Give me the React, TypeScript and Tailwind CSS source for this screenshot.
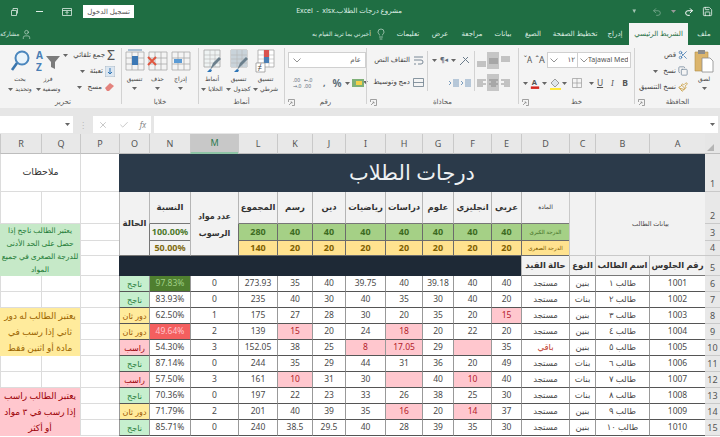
import { ReactNode } from 'react'
import { Copy, Lightbulb, Paintbrush, Redo2, Save, Scissors, Undo2, User, Check, X } from 'lucide-react'

const tabs = [
  { label: 'ملف', w: 'w-[32px]' },
  { label: 'الشريط الرئيسي', w: 'w-[59px]', active: true },
  { label: 'إدراج', w: 'w-[28px]' },
  { label: 'تخطيط الصفحة', w: 'w-[52px]' },
  { label: 'الصيغ', w: 'w-[32px]' },
  { label: 'بيانات', w: 'w-[28px]' },
  { label: 'مراجعة', w: 'w-[34px]' },
  { label: 'عرض', w: 'w-[30px]' },
  { label: 'تعليمات', w: 'w-[34px]' },
]

const columns = ['A', 'B', 'C', 'D', 'E', 'F', 'G', 'H', 'I', 'J', 'K', 'L', 'M', 'N', 'O', 'P', 'Q', 'R']
const subjects = ['عربي', 'انجليزي', 'علوم', 'دراسات', 'رياضيات', 'دين', 'رسم', 'المجموع']

const students = [
  { id: '1001', name: 'طالب ١', kind: 'بنين', reg: 'مستجد', scores: ['40', '40', '39.18', '40', '39.75', '40', '35'], total: '273.93', fails: '0', pct: '97.83%', status: 'ناجح' },
  { id: '1002', name: 'طالب ٢', kind: 'بنات', reg: 'مستجد', scores: ['20', '40', '30', '35', '40', '30', '40'], total: '235', fails: '0', pct: '83.93%', status: 'ناجح' },
  { id: '1003', name: 'طالب ٣', kind: 'بنين', reg: 'مستجد', scores: ['15', '20', '35', '20', '30', '28', '27'], total: '175', fails: '1', pct: '62.50%', status: 'دور ثان' },
  { id: '1004', name: 'طالب ٤', kind: 'بنين', reg: 'مستجد', scores: ['20', '22', '20', '18', '24', '20', '15'], total: '139', fails: '2', pct: '49.64%', status: 'دور ثان' },
  { id: '1005', name: 'طالب ٥', kind: 'بنين', reg: 'باقي', scores: ['35', '', '29', '17.05', '8', '25', '38'], total: '152.05', fails: '3', pct: '54.30%', status: 'راسب' },
  { id: '1006', name: 'طالب ٦', kind: 'بنات', reg: 'مستجد', scores: ['49', '20', '36', '31', '44', '29', '35'], total: '244', fails: '0', pct: '87.14%', status: 'ناجح' },
  { id: '1007', name: 'طالب ٧', kind: 'بنات', reg: 'مستجد', scores: ['40', '10', '40', '', '30', '31', '10'], total: '161', fails: '3', pct: '57.50%', status: 'راسب' },
  { id: '1008', name: 'طالب ٨', kind: 'بنات', reg: 'مستجد', scores: ['30', '25', '38', '26', '33', '23', '22'], total: '197', fails: '0', pct: '70.36%', status: 'ناجح' },
  { id: '1009', name: 'طالب ٩', kind: 'بنين', reg: 'مستجد', scores: ['37', '14', '20', '16', '35', '39', '40'], total: '201', fails: '2', pct: '71.79%', status: 'دور ثان' },
  { id: '1010', name: 'طالب ١٠', kind: 'بنين', reg: 'مستجد', scores: ['30', '35', '39', '28', '40', '29.5', '38.5'], total: '240', fails: '0', pct: '85.71%', status: 'ناجح' },
]

const statusStyle: Record<string, string> = {
  'ناجح': 'bg-[#c6efce] text-[#1c7a35]',
  'دور ثان': 'bg-[#ffeb9c] text-[#9c5700]',
  'راسب': 'bg-[#ffc7ce] text-[#9c0006]',
}

const center = 'flex items-center justify-center overflow-hidden whitespace-nowrap'
const blank = 'border-l border-b border-[#dcdcdc]'
const head = `${center} bg-[#f2f2f2] border-l border-b border-l-[#b5b5b5] border-b-[#777] text-[#333] font-bold text-[8.5px]`
const line = `${center} border-l border-b border-l-[#999] border-b-[#555]`
const arabic = `${line} bg-white text-[#4a4a4a] text-[8.5px]`
const num = `${line} text-[#4a4a4a] text-[8.5px]`
const green = `${center} bg-[#a5d086] border-l border-b border-[#6b6b6b] text-[#3d6b22] font-bold text-[9px]`
const yellow = `${center} bg-[#ffe28f] border-l border-b border-[#6b6b6b] text-[#806000] font-bold text-[9px]`

function Caret({ className = '' }: { className?: string }) {
  return (
    <svg width="5" height="3" viewBox="0 0 5 3" className={`shrink-0 ${className}`}>
      <path d="M0 0h5L2.5 3z" fill="#666" />
    </svg>
  )
}

function Launcher() {
  return (
    <svg width="7" height="7" viewBox="0 0 7 7" fill="none" stroke="#8a8a8a" strokeWidth="0.8">
      <path d="M.5 3V.5H6.5V6.5H4" />
      <path d="M1 6l3-3M2.5 3H4V4.5" />
    </svg>
  )
}

function Group({ w, label, launcher, children }: { w: string; label: string; launcher?: boolean; children: ReactNode }) {
  return (
    <div className={`${w} shrink-0 flex flex-col`}>
      <div className="h-[52px] flex">{children}</div>
      <div className="h-[11px] grid grid-cols-[10px_1fr_10px] items-center text-[7px] text-[#555]">
        <span />
        <span className="text-center whitespace-nowrap">{label}</span>
        {launcher ? <Launcher /> : <span />}
      </div>
    </div>
  )
}

function Divider() {
  return <div className="w-px h-[56px] mt-[3px] bg-[#d2d2d2] shrink-0" />
}

function BigButton({ w, icon, lines, caret }: { w: string; icon: ReactNode; lines: string[]; caret?: boolean }) {
  return (
    <div className={`${w} flex flex-col items-center pt-[4px] text-[6px] leading-[10px] text-[#444]`}>
      <div className="h-[24px] flex items-center">{icon}</div>
      <div className="mt-[1px] text-center whitespace-nowrap">
        {lines.map((l, i) => (
          <div key={i} className="flex items-center justify-center gap-[2px]">
            {l}
            {i === lines.length - 1 && lines.length > 1 && caret ? <Caret /> : null}
          </div>
        ))}
      </div>
      {lines.length === 1 && caret ? <Caret className="mt-[3px]" /> : null}
    </div>
  )
}

function SmallRow({ icon, label, caret }: { icon: ReactNode; label: string; caret?: boolean }) {
  return (
    <div className="h-[16px] flex items-center gap-[2px] text-[7px] text-[#444] whitespace-nowrap">
      {icon}
      <span>{label}</span>
      {caret ? <Caret className="mr-[3px]" /> : null}
    </div>
  )
}

function CellsIcon({ mark }: { mark: 'insert' | 'delete' | 'format' }) {
  return (
    <svg width="24" height="24" viewBox="0 0 24 24" fill="none">
      <path d="M3 3h18v18H3zM3 9h18M3 15h18M9 3v18M15 3v18" stroke="#a9a9a9" strokeWidth="0.8" />
      {mark === 'insert' && <path d="M5 10h8v4H5z" fill="#5b9bd5" />}
      {mark === 'delete' && <path d="M2 8l8 8M10 8l-8 8" stroke="#e0563f" strokeWidth="2" />}
      {mark === 'format' && <path d="M9 7h6v9H9z" fill="#3c78b5" />}
      {mark === 'format' && <path d="M5 1h14" stroke="#7a9cc0" strokeWidth="1.2" />}
    </svg>
  )
}

function StyleIcon({ kind }: { kind: 'cond' | 'table' | 'cell' }) {
  return (
    <svg width="22" height="24" viewBox="0 0 22 24" fill="none">
      <path d="M3 1h16v17H3z" fill={kind === 'cell' ? '#eef3f3' : '#fff'} stroke="#a5a5a5" strokeWidth="0.8" />
      {kind === 'table' && <path d="M3 1h16v17H3z" fill="#c9d3da" />}
      <path d="M3 6h16M3 10h16M3 14h16M9 1v17M14 1v17" stroke="#b5b5b5" strokeWidth="0.6" />
      {kind === 'cond' && <path d="M9 1h5v7H9z" fill="#d9534f" />}
      {kind === 'cond' && <path d="M9 8h5v6H9z" fill="#4a7fb5" />}
      {kind === 'cond' && <path d="M1 14h9v9H1z" fill="#fff" stroke="#8a8a8a" strokeWidth="0.7" />}
      {kind === 'cond' && <text direction="ltr" x="2.5" y="21.5" fontSize="8" fill="#444">≠</text>}
      {kind !== 'cond' && <path d="M9 21l3-7 6-6 2 2-6 6z" fill="#6b7f8c" />}
      {kind !== 'cond' && <path d="M6 23l3-3 2 1-1 2z" fill="#2e75b6" />}
    </svg>
  )
}

function Chevron() {
  return (
    <svg width="8" height="5" viewBox="0 0 8 5" fill="none" stroke="#777" strokeWidth="0.8" className="shrink-0">
      <path d="M.5.5L4 4 7.5.5" />
    </svg>
  )
}

function AlignBlock({ lines, active }: { lines: 'top' | 'mid' | 'bottom' | 'right' | 'center' | 'left' | 'indent'; active?: boolean }) {
  const d: Record<string, string> = {
    top: 'M1 2h9M1 4h9M1 6h9',
    mid: 'M1 4h9M1 6h9M1 8h9',
    bottom: 'M1 7h9M1 9h9M1 11h9',
    right: 'M1 3h9M4 5h6M1 7h9M4 9h6',
    center: 'M1 3h9M3 5h5M1 7h9M3 9h5',
    left: 'M1 3h9M1 5h6M1 7h9M1 9h6',
    indent: 'M5 3h6M5 5h6M5 7h6M5 9h6M1 4l2 2-2 2',
  }
  return (
    <span className={`w-[12px] h-[17px] flex items-center justify-center ${active ? 'bg-[#c6c6c6]' : ''}`}>
      <svg width="11" height="12" viewBox="0 0 11 12" fill="none" stroke={lines === 'indent' ? '#5a86b0' : '#7a7a7a'} strokeWidth="0.8">
        <path d={d[lines]} />
      </svg>
    </span>
  )
}

function Ribbon() {
  return (
    <div className="h-[63px] shrink-0 bg-[#f4f4f4] flex">
      <Group w="w-[85px]" label="الحافظة" launcher>
        <BigButton
          w="w-[32px]"
          caret
          lines={['لصق']}
          icon={
            <svg width="20" height="24" viewBox="0 0 20 24">
              <path d="M1 3h13v19H1z" fill="#dcb56c" stroke="#b08d47" strokeWidth="0.6" />
              <path d="M4 1h7v4H4z" fill="#8d8d8d" />
              <path d="M8 9h8l3 3v11H8z" fill="#fff" stroke="#8a8a8a" strokeWidth="0.8" />
            </svg>
          }
        />
        <div className="flex flex-col pt-[2px]">
          <SmallRow icon={<Scissors size={10} color="#4a7fb5" />} label="قص" />
          <SmallRow icon={<Copy size={10} color="#7d8fa1" />} label="نسخ" caret />
          <SmallRow icon={<Paintbrush size={10} color="#c79a3a" />} label="نسخ التنسيق" />
        </div>
      </Group>
      <Divider />
      <Group w="w-[115px]" label="خط" launcher>
        <div className="flex flex-col pt-[7px] pr-[3px]">
          <div className="flex items-center h-[16px]">
            <div className="w-[54px] h-[16px] bg-white border border-[#d0d0d0] flex items-center justify-between px-[2px] text-[7px] text-[#555]" dir="ltr">
              <Chevron />
              <span className="overflow-hidden whitespace-nowrap">Tajawal Medi</span>
            </div>
            <div className="w-[30px] h-[16px] bg-white border-y border-l border-[#d0d0d0] flex items-center justify-between px-[2px] text-[7px] text-[#555]" dir="ltr">
              <Chevron />
              <span>١٢</span>
            </div>
            <span className="w-[14px] text-center text-[9px] text-[#555]">Aˆ</span>
            <span className="w-[10px] text-center text-[8px] text-[#555]">Aˇ</span>
          </div>
          <div className="flex items-center h-[16px] mt-[7px] text-[8.5px] text-[#555]">
            <b className="w-[12px] text-center">B</b>
            <i className="w-[13px] text-center font-serif">I</i>
            <u className="w-[12px] text-center">U</u>
            <span className="w-[6px] flex justify-center"><Caret /></span>
            <span className="w-[22px] flex justify-center">
              <svg width="10" height="10" viewBox="0 0 10 10" fill="none" stroke="#9a9a9a" strokeWidth="0.7">
                <path d="M.5.5h9v9h-9zM.5 5h9M5 .5v9" />
              </svg>
            </span>
            <span className="w-[4px] flex justify-center"><Caret /></span>
            <span className="w-[14px] flex justify-center">
              <svg width="13" height="13" viewBox="0 0 13 13">
                <path d="M2 6l4-4 4 4-4 4z" fill="#dfe6ec" stroke="#7a7a7a" strokeWidth="0.7" />
                <path d="M1 11h11v2H1z" fill="#ffe93b" />
              </svg>
            </span>
            <span className="w-[8px] flex justify-center"><Caret /></span>
            <span className="w-[10px] flex justify-center">
              <svg width="12" height="13" viewBox="0 0 12 13">
                <text direction="ltr" x="2" y="8.5" fontSize="9" fill="#555" fontWeight="700">A</text>
                <path d="M1 10h10v3H1z" fill="#d5281f" />
              </svg>
            </span>
            <span className="w-[10px] flex justify-center"><Caret /></span>
          </div>
        </div>
      </Group>
      <Divider />
      <Group w="w-[151px]" label="محاذاة" launcher>
        <div className="flex flex-col pt-[7px] pr-[7px] w-[43px] shrink-0">
          <div className="flex h-[17px]">
            <AlignBlock lines="top" />
            <AlignBlock lines="mid" active />
            <AlignBlock lines="bottom" />
          </div>
          <div className="flex h-[17px] mt-[5px]">
            <AlignBlock lines="right" />
            <AlignBlock lines="center" active />
            <AlignBlock lines="left" />
          </div>
        </div>
        <div className="w-px h-[40px] mt-[6px] bg-[#d2d2d2] shrink-0" />
        <div className="flex flex-col pt-[7px] w-[46px] shrink-0">
          <div className="flex h-[17px] items-center">
            <span className="w-[16px] flex justify-end">
              <svg width="12" height="12" viewBox="0 0 12 12" fill="none" stroke="#6c7d8c" strokeWidth="1">
                <path d="M2 10l8-8M5 2l6 6" />
              </svg>
            </span>
            <Caret className="mr-[2px]" />
            <span className="w-[14px] text-center text-[7px] text-[#5c6b78] font-bold" dir="ltr">¶◂</span>
            <Caret />
          </div>
          <div className="flex h-[17px] items-center mt-[5px] pr-[3px]">
            <AlignBlock lines="indent" />
            <AlignBlock lines="indent" />
          </div>
        </div>
        <div className="w-px h-[40px] mt-[6px] bg-[#d2d2d2] shrink-0" />
        <div className="flex flex-col pt-[7px] pr-[3px]">
          <div className="h-[17px] flex items-center gap-[3px] text-[7px] text-[#444] whitespace-nowrap">
            <svg width="11" height="11" viewBox="0 0 11 11" fill="none" stroke="#6c7d8c" strokeWidth="0.9">
              <path d="M1 2h9M1 5h7a2 2 0 0 1 0 4H5M1 9h2" />
            </svg>
            التفاف النص
          </div>
          <div className="h-[17px] mt-[5px] flex items-center gap-[3px] text-[7px] text-[#444] whitespace-nowrap">
            <svg width="11" height="11" viewBox="0 0 11 11" fill="none" stroke="#6c7d8c" strokeWidth="0.8">
              <path d="M.5 1.5h10v8H.5zM.5 5.5h10" />
            </svg>
            دمج وتوسيط
            <Caret className="mr-[2px]" />
          </div>
        </div>
      </Group>
      <Divider />
      <Group w="w-[81px]" label="رقم" launcher>
        <div className="flex flex-col pt-[7px] w-full pl-[3px]">
          <div className="h-[16px] bg-white border border-[#d0d0d0] flex items-center justify-between px-[4px] text-[7px] text-[#555]">
            عام
            <Chevron />
          </div>
          <div className="flex h-[16px] items-center mt-[7px] text-[#5c6b78] whitespace-nowrap" dir="ltr">
            <span className="ml-[5px] text-[5px] leading-[6px] w-[10px]">.00<br />→.0</span>
            <span className="ml-[1px] text-[5px] leading-[6px] w-[10px]">←.0<br />.00</span>
            <span className="ml-[9px] text-[9px] font-bold">,</span>
            <span className="ml-[7px] text-[10px] font-bold">%</span>
            <Caret className="ml-[3px]" />
            <svg width="12" height="10" viewBox="0 0 12 10" className="ml-[2px]">
              <path d="M0 1h12v8H0z" fill="#7fb077" />
              <path d="M4 3h6v4H4z" fill="#f4d14a" />
            </svg>
          </div>
        </div>
      </Group>
      <Divider />
      <Group w="w-[85px]" label="أنماط">
        <div className="flex pr-[5px]">
          <BigButton w="w-[27px]" icon={<StyleIcon kind="cond" />} lines={['تنسيق', 'شرطي']} caret />
          <BigButton w="w-[27px]" icon={<StyleIcon kind="table" />} lines={['تنسيق', 'كجدول']} caret />
          <BigButton w="w-[26px]" icon={<StyleIcon kind="cell" />} lines={['أنماط', 'الخلايا']} caret />
        </div>
      </Group>
      <Divider />
      <Group w="w-[76px]" label="خلايا">
        <div className="flex pr-[6px]">
          <BigButton w="w-[23px]" icon={<CellsIcon mark="insert" />} lines={['إدراج']} caret />
          <BigButton w="w-[23px]" icon={<CellsIcon mark="delete" />} lines={['حذف']} caret />
          <BigButton w="w-[23px]" icon={<CellsIcon mark="format" />} lines={['تنسيق']} caret />
        </div>
      </Group>
      <Divider />
      <Group w="w-[116px]" label="تحرير">
        <div className="flex flex-col pt-[2px] pr-[6px] w-[58px]">
          <SmallRow icon={<span className="text-[14px] leading-[14px] text-[#555]">Σ</span>} label="جمع تلقائي" caret />
          <SmallRow
            icon={
              <svg width="10" height="11" viewBox="0 0 10 11">
                <path d="M0 0h10v11H0z" fill="#dce6f0" stroke="#8a9aa8" strokeWidth="0.5" />
                <path d="M5 2v6M3 6l2 2 2-2" stroke="#2e75b6" fill="none" strokeWidth="1" />
              </svg>
            }
            label="تعبئة"
            caret
          />
          <SmallRow
            icon={
              <svg width="11" height="10" viewBox="0 0 11 10">
                <path d="M1 6l5-5 4 3-5 5H3z" fill="#e3827d" />
              </svg>
            }
            label="مسح"
            caret
          />
        </div>
        <BigButton
          w="w-[30px]"
          icon={
            <svg width="24" height="24" viewBox="0 0 24 24">
              <text direction="ltr" x="0" y="10" fontSize="10" fontWeight="700" fill="#4a7fb5">A</text>
              <text direction="ltr" x="0" y="22" fontSize="10" fontWeight="700" fill="#4a7fb5">Z</text>
              <path d="M10 7h14l-5 6v7l-4-2v-5z" fill="#7b7b7b" />
            </svg>
          }
          lines={['فرز', 'وتصفية']}
          caret
        />
        <BigButton
          w="w-[26px]"
          icon={
            <svg width="20" height="24" viewBox="0 0 20 24" fill="none">
              <circle cx="12" cy="9" r="6.5" fill="#e8f3fb" stroke="#4a86bd" strokeWidth="2" />
              <path d="M7 14l-5 7" stroke="#3a75ad" strokeWidth="2.6" />
            </svg>
          }
          lines={['بحث', 'وتحديد']}
          caret
        />
      </Group>
    </div>
  )
}

function Sheet() {
  return (
    <div className="grid grid-cols-[15px_56px_54px_26px_48px_30px_38px_31px_37px_40px_33px_35px_39px_48px_41px_30px_39px_39px_41px] grid-rows-[20px_38px_32px_17px_15px_20px_repeat(11,16px)] bg-white text-[#4a4a4a]">
      <div className="bg-[#e6e6e6] flex items-end justify-end p-[2px] border-b border-[#bdbdbd]">
        <svg width="7" height="7" viewBox="0 0 7 7">
          <path d="M7 0v7H0z" fill="#b5b5b5" />
        </svg>
      </div>
      {columns.map((c) => (
        <div
          key={c}
          className={`${center} text-[9px] border-l border-[#c9c9c9] ${
            c === 'M' ? 'bg-[#c8c8c8] text-[#2d7a4e] border-b-2 border-b-[#8fc5a6]' : 'bg-[#e8e8e8] text-[#555] border-b border-b-[#bdbdbd]'
          }`}
        >
          {c}
        </div>
      ))}

      <RowNum n={1} />
      <div className={`${center} col-span-15 bg-[#2b3a4a] text-[#eef1f3] text-[21px]`}>درجات الطلاب</div>
      <div className={blank} />
      <div className={`${center} col-span-2 text-[9.5px] text-[#333] ${blank}`}>ملاحظات</div>

      <RowNum n={2} />
      <div className={`${center} col-span-2 row-span-3 bg-[#f2f2f2] border-l border-b border-[#c9c9c9] text-[6.5px]`}>بيانات الطالب</div>
      <div className={`${center} row-span-3 bg-[#f2f2f2] border-l border-b border-[#c9c9c9]`} />
      <div className={`${center} bg-[#f2f2f2] border-l border-b border-l-[#b5b5b5] border-b-[#777] text-[#333] text-[6px]`}>المادة</div>
      {subjects.map((s) => (
        <div key={s} className={head}>
          {s}
        </div>
      ))}
      <div className={`${center} flex-col row-span-3 bg-[#f2f2f2] border-l border-b border-l-[#b5b5b5] border-b-[#777] text-[#333] font-bold text-[8px] leading-[17px]`}>
        <span>عدد مواد</span>
        <span>الرسوب</span>
      </div>
      <div className={head}>النسبة</div>
      <div className={`${head} row-span-3`}>الحالة</div>
      <div className={blank} />
      <div className={blank} />
      <div className={blank} />

      <RowNum n={3} />
      <div className={`${center} bg-[#a5d086] border-l border-b border-[#6b6b6b] text-[#3d6b22] text-[5.5px]`}>الدرجة الكبرى</div>
      {subjects.map((s) => (
        <div key={s} className={green}>
          {s === 'المجموع' ? '280' : '40'}
        </div>
      ))}
      <div className={`${center} bg-[#f2f2f2] border-l border-b border-[#777] text-[#4d7a2c] font-bold text-[9px]`}>100.00%</div>
      <div className={blank} />
      <Note color="bg-[#c6e9c8] text-[#1c7a35]" lines={['يعتبر الطالب ناجح إذا', 'حصل على الحد الأدنى', 'للدرجة الصغرى في جميع', 'المواد']} size="text-[7.5px]" leading="leading-[13px]" />

      <RowNum n={4} />
      <div className={`${center} bg-[#ffe28f] border-l border-b border-[#6b6b6b] text-[#806000] text-[5.5px]`}>الدرجة الصغرى</div>
      {subjects.map((s) => (
        <div key={s} className={yellow}>
          {s === 'المجموع' ? '140' : '20'}
        </div>
      ))}
      <div className={`${center} bg-[#f2f2f2] border-l border-b border-[#777] text-[#7f6a10] font-bold text-[9px]`}>50.00%</div>
      <div className={blank} />

      <RowNum n={5} />
      <div className={head}>رقم الجلوس</div>
      <div className={head}>اسم الطالب</div>
      <div className={head}>النوع</div>
      <div className={head}>حالة القيد</div>
      <div className="col-span-11 bg-[#1e2936]" />
      <div className={blank} />

      {students.map((s, i) => {
        const pct = parseFloat(s.pct)
        return [
          <RowNum key="n" n={i + 6} />,
          <div key="id" className={`${num} bg-white`}>{s.id}</div>,
          <div key="name" className={arabic}>{s.name}</div>,
          <div key="kind" className={arabic}>{s.kind}</div>,
          s.reg === 'باقي' ? (
            <div key="reg" className={`${line} bg-white text-[#c0392b] text-[8.5px]`}>{s.reg}</div>
          ) : (
            <div key="reg" className={arabic}>{s.reg}</div>
          ),
          ...s.scores.map((v, j) => (
            <div key={j} className={`${line} text-[8.5px] ${v === '' || parseFloat(v) < 20 ? 'bg-[#ffc7ce] text-[#b3202a]' : 'bg-white text-[#4a4a4a]'}`}>
              {v}
            </div>
          )),
          <div key="total" className={`${num} bg-white`}>{s.total}</div>,
          <div key="fails" className={`${num} bg-white`}>{s.fails}</div>,
          <div
            key="pct"
            className={`${line} text-[8.5px] ${pct >= 90 ? 'bg-[#4f7f2f] text-[#9fcf85]' : pct < 50 ? 'bg-[#f45f5f] text-[#ffc7ce]' : 'bg-white text-[#4a4a4a]'}`}
          >
            {s.pct}
          </div>,
          <div key="status" className={`${line} text-[8px] ${statusStyle[s.status]}`}>{s.status}</div>,
          <div key="p" className={blank} />,
          ...(i === 2
            ? [<Note key="note" color="bg-[#ffeb9c] text-[#9c6500]" lines={['يعتبر الطالب له دور', 'ثاني إذا رسب في', 'مادة أو اثنين فقط']} />]
            : i === 7
              ? [<Note key="note" color="bg-[#ffc7ce] text-[#9c0006]" lines={['يعتبر الطالب راسب', 'إذا رسب في ٣ مواد', 'أو أكثر']} />]
              : i === 3 || i === 4 || i === 8 || i === 9
                ? []
                : [<div key="q" className={blank} />, <div key="r" className={blank} />]),
        ]
      })}
    </div>
  )
}

function RowNum({ n }: { n: number }) {
  return (
    <div className="bg-[#e8e8e8] border-b border-[#c9c9c9] flex items-end justify-center text-[9px] leading-[15px] text-[#555]">{n}</div>
  )
}

function Note({ color, lines, size = 'text-[9px]', leading = 'leading-[16px]' }: { color: string; lines: string[]; size?: string; leading?: string }) {
  return (
    <div className={`col-span-2 row-span-3 flex flex-col items-center justify-center whitespace-nowrap overflow-hidden ${color} ${size} ${leading}`}>
      {lines.map((l) => (
        <span key={l}>{l}</span>
      ))}
    </div>
  )
}

export default function App() {
  return (
    <div dir="rtl" className="w-[720px] h-[437px] overflow-hidden flex flex-col bg-white [font-family:'Noto_Sans','DejaVu_Sans',sans-serif]">
      <div className="h-[23px] shrink-0 bg-[#1f6e43] flex items-center text-white">
        <div className="w-[318px] shrink-0 flex items-center gap-[8px] pr-[7px]">
          <Save size={11} strokeWidth={1.6} />
          <Redo2 size={10} strokeWidth={2.4} />
          <Caret className="invert" />
          <Undo2 size={10} className="opacity-40 mr-[1px]" />
          <span className="text-[7px] opacity-60 mr-[8px]">▾</span>
        </div>
        <div className="text-[7px] text-[#dfeee6] whitespace-pre">{'مشروع درجات الطلاب.xlsx\u200F  -  \u200FExcel'}</div>
        <div className="mr-auto flex items-center">
          <button className="w-[51px] h-[13px] bg-white text-[7px] leading-[13px] text-[#555] ml-[11px] whitespace-nowrap">تسجيل الدخول</button>
          <svg width="10" height="8" viewBox="0 0 10 8" fill="none" stroke="#dfeee6" strokeWidth="0.8" className="ml-[19px]">
            <path d="M.5.5h9v7h-9zM.5 2.5h9M5 3.5v3M3.5 5L5 3.5 6.5 5" />
          </svg>
          <div className="w-[7px] h-px bg-[#dfeee6] ml-[18px]" />
          <svg width="7" height="8" viewBox="0 0 7 8" fill="none" stroke="#dfeee6" strokeWidth="0.8" className="ml-[11px]">
            <path d="M.5 2.5h5v5h-5zM2 2.5V.5h4.5v5" />
          </svg>
        </div>
      </div>

      <div className="h-[22px] shrink-0 bg-[#1f6e43] flex text-[7px] text-[#dfeee6]">
        {tabs.map((t) => (
          <div
            key={t.label}
            className={`${t.w} shrink-0 flex items-center justify-center whitespace-nowrap ${t.active ? 'bg-[#f4f4f4] text-[#1f6e43]' : ''}`}
          >
            {t.label}
          </div>
        ))}
        <div className="flex items-center gap-[4px] whitespace-nowrap mr-[4px]">
          <Lightbulb size={12} strokeWidth={1.2} />
          <span className="text-[6px]">أخبرني بما تريد القيام به</span>
        </div>
        <div className="mr-auto flex items-center gap-[2px] text-[6px]">
          <User size={11} strokeWidth={1.2} />
          مشاركة
        </div>
      </div>

      <Ribbon />

      <div className="h-[26px] shrink-0 bg-[#e6e6e6] flex items-end pb-px">
        <div className="w-[564px] h-[17px] mr-[2px] bg-white flex items-center pr-[3px]">
          <Caret />
        </div>
        <div className="w-[58px] h-[17px] mr-[3px] bg-white flex items-center justify-center gap-[11px] text-[#8a8a8a]">
          <span className="text-[8px] italic">fx</span>
          <Check size={10} color="#bdbdbd" />
          <X size={10} color="#bdbdbd" />
        </div>
        <div className="w-[20px] text-center text-[#b5b5b5] text-[8px] leading-[17px]">⋮</div>
        <div className="flex-1 h-[17px] bg-white flex items-center pr-[3px]">
          <Caret />
        </div>
      </div>

      <Sheet />
    </div>
  )
}
